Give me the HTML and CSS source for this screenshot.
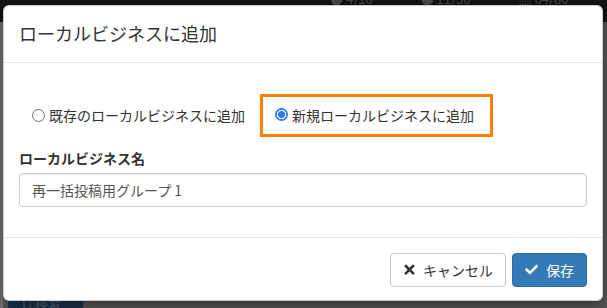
FILE: index.html
```html
<!DOCTYPE html>
<html lang="ja">
<head>
<meta charset="utf-8">
<title>ローカルビジネスに追加</title>
<link rel="stylesheet" href="styles.css">
</head>
<body>
<div class="page">
  <div class="topbar">
    <span class="stat">● 4/10</span>
    <span class="stat">● 11/30</span>
    <span class="stat">▥ 64/80</span>
  </div>
  <div class="under">
    <div class="bottom-tab">l | 検索</div>
  </div>
</div>

<div class="modal">
  <div class="modal-header">
    <h4 class="modal-title">ローカルビジネスに追加</h4>
  </div>
  <div class="modal-body">
    <div class="radio-row">
      <label class="option">
        <span class="radio"></span>
        <span>既存のローカルビジネスに追加</span>
      </label>
      <label class="option option-selected">
        <span class="radio radio-checked"></span>
        <span>新規ローカルビジネスに追加</span>
      </label>
    </div>
    <div class="form-group">
      <div class="field-label">ローカルビジネス名</div>
      <div class="input">再一括投稿用グループ 1</div>
    </div>
  </div>
  <div class="modal-footer">
    <button class="btn btn-default">
      <svg class="icon" viewBox="0 0 13 13" width="13" height="13"><path d="M3 3.2 L10 10.2 M10 3.2 L3 10.2" stroke="#333" stroke-width="2.6" stroke-linecap="square" fill="none"/></svg>
      <span>キャンセル</span>
    </button>
    <button class="btn btn-primary">
      <svg class="icon" viewBox="0 0 13 13" width="13" height="13"><path d="M1.8 6.8 L5 9.8 L11.4 3.4" stroke="#fff" stroke-width="2.6" stroke-linecap="square" stroke-linejoin="miter" fill="none"/></svg>
      <span>保存</span>
    </button>
  </div>
</div>
</body>
</html>
```
FILE: styles.css
```css
* { box-sizing: border-box; }

html, body {
  margin: 0;
  padding: 0;
}

body {
  width: 607px;
  height: 308px;
  overflow: hidden;
  background: #5b5b5b;
  font-family: "Noto Sans CJK JP", "Noto Sans", sans-serif;
  font-size: 14px;
  line-height: 20px;
  color: #333;
  position: relative;
}

.page {
  height: 308px;
  display: flex;
  flex-direction: column;
}

.topbar {
  height: 30px;
  background: #121212;
  display: flex;
  align-items: flex-start;
  padding-left: 330px;
  gap: 48px;
  color: #4a4a4a;
  font-size: 13px;
  line-height: 13px;
  margin-top: -8px;
}

.under {
  flex: 1;
  display: flex;
  align-items: flex-end;
  background: linear-gradient(to right, #777 0, #777 3px, #5b5b5b 3px);
}

.bottom-tab {
  margin-left: 8px;
  width: 75px;
  height: 12px;
  background: #1f3650;
  color: #55657a;
  font-size: 13px;
  line-height: 13px;
  padding-left: 14px;
  overflow: hidden;
}

.modal {
  position: absolute;
  left: 3px;
  top: 5px;
  width: 600px;
  background: #fff;
  border: 1px solid rgba(0, 0, 0, 0.2);
  border-radius: 6px;
  box-shadow: 0 5px 15px rgba(0, 0, 0, 0.5);
}

.modal-header {
  padding: 15px;
  border-bottom: 1px solid #e5e5e5;
}

.modal-title {
  margin: 0;
  font-size: 18px;
  font-weight: normal;
  line-height: 25.7px;
  color: #333;
}

.modal-body {
  padding: 15px;
}

.radio-row {
  margin-top: 16px;
  display: flex;
  align-items: center;
}

.option {
  display: flex;
  align-items: center;
  gap: 4px;
  margin-left: 13px;
  color: #333;
}

.option-selected {
  margin-left: 15px;
  border: 3px solid #ff8000;
  padding: 8px 16px 9px 12px;
}

.radio {
  width: 13px;
  height: 13px;
  border-radius: 50%;
  border: 1px solid #6e6e6e;
  background: #fff;
  flex: none;
}

.radio-checked {
  border: none;
  background: radial-gradient(circle, #2f7bf5 0, #2f7bf5 3.4px, #fff 3.8px, #fff 4.6px, #2f7bf5 5px);
}

.form-group {
  margin-top: 11px;
  margin-bottom: 15px;
}

.field-label {
  font-weight: bold;
  margin-bottom: 5px;
  color: #333;
}

.input {
  height: 34px;
  padding: 6px 12px;
  border: 1px solid #ccc;
  border-radius: 4px;
  box-shadow: inset 0 1px 1px rgba(0, 0, 0, 0.075);
  color: #555;
}

.modal-footer {
  border-top: 1px solid #e5e5e5;
  padding: 15px 15px 13px;
  display: flex;
  justify-content: flex-end;
  gap: 6px;
}

.btn {
  display: flex;
  align-items: center;
  gap: 8px;
  height: 34px;
  padding: 6px 12px;
  font-family: inherit;
  font-size: 14px;
  line-height: 20px;
  border-radius: 4px;
  border: 1px solid #ccc;
  margin: 0;
}

.btn-default {
  background: #fff;
  color: #333;
  gap: 7px;
}

.btn-primary {
  background: #337ab7;
  border-color: #2e6da4;
  color: #fff;
}

.icon {
  display: block;
  flex: none;
}
```
